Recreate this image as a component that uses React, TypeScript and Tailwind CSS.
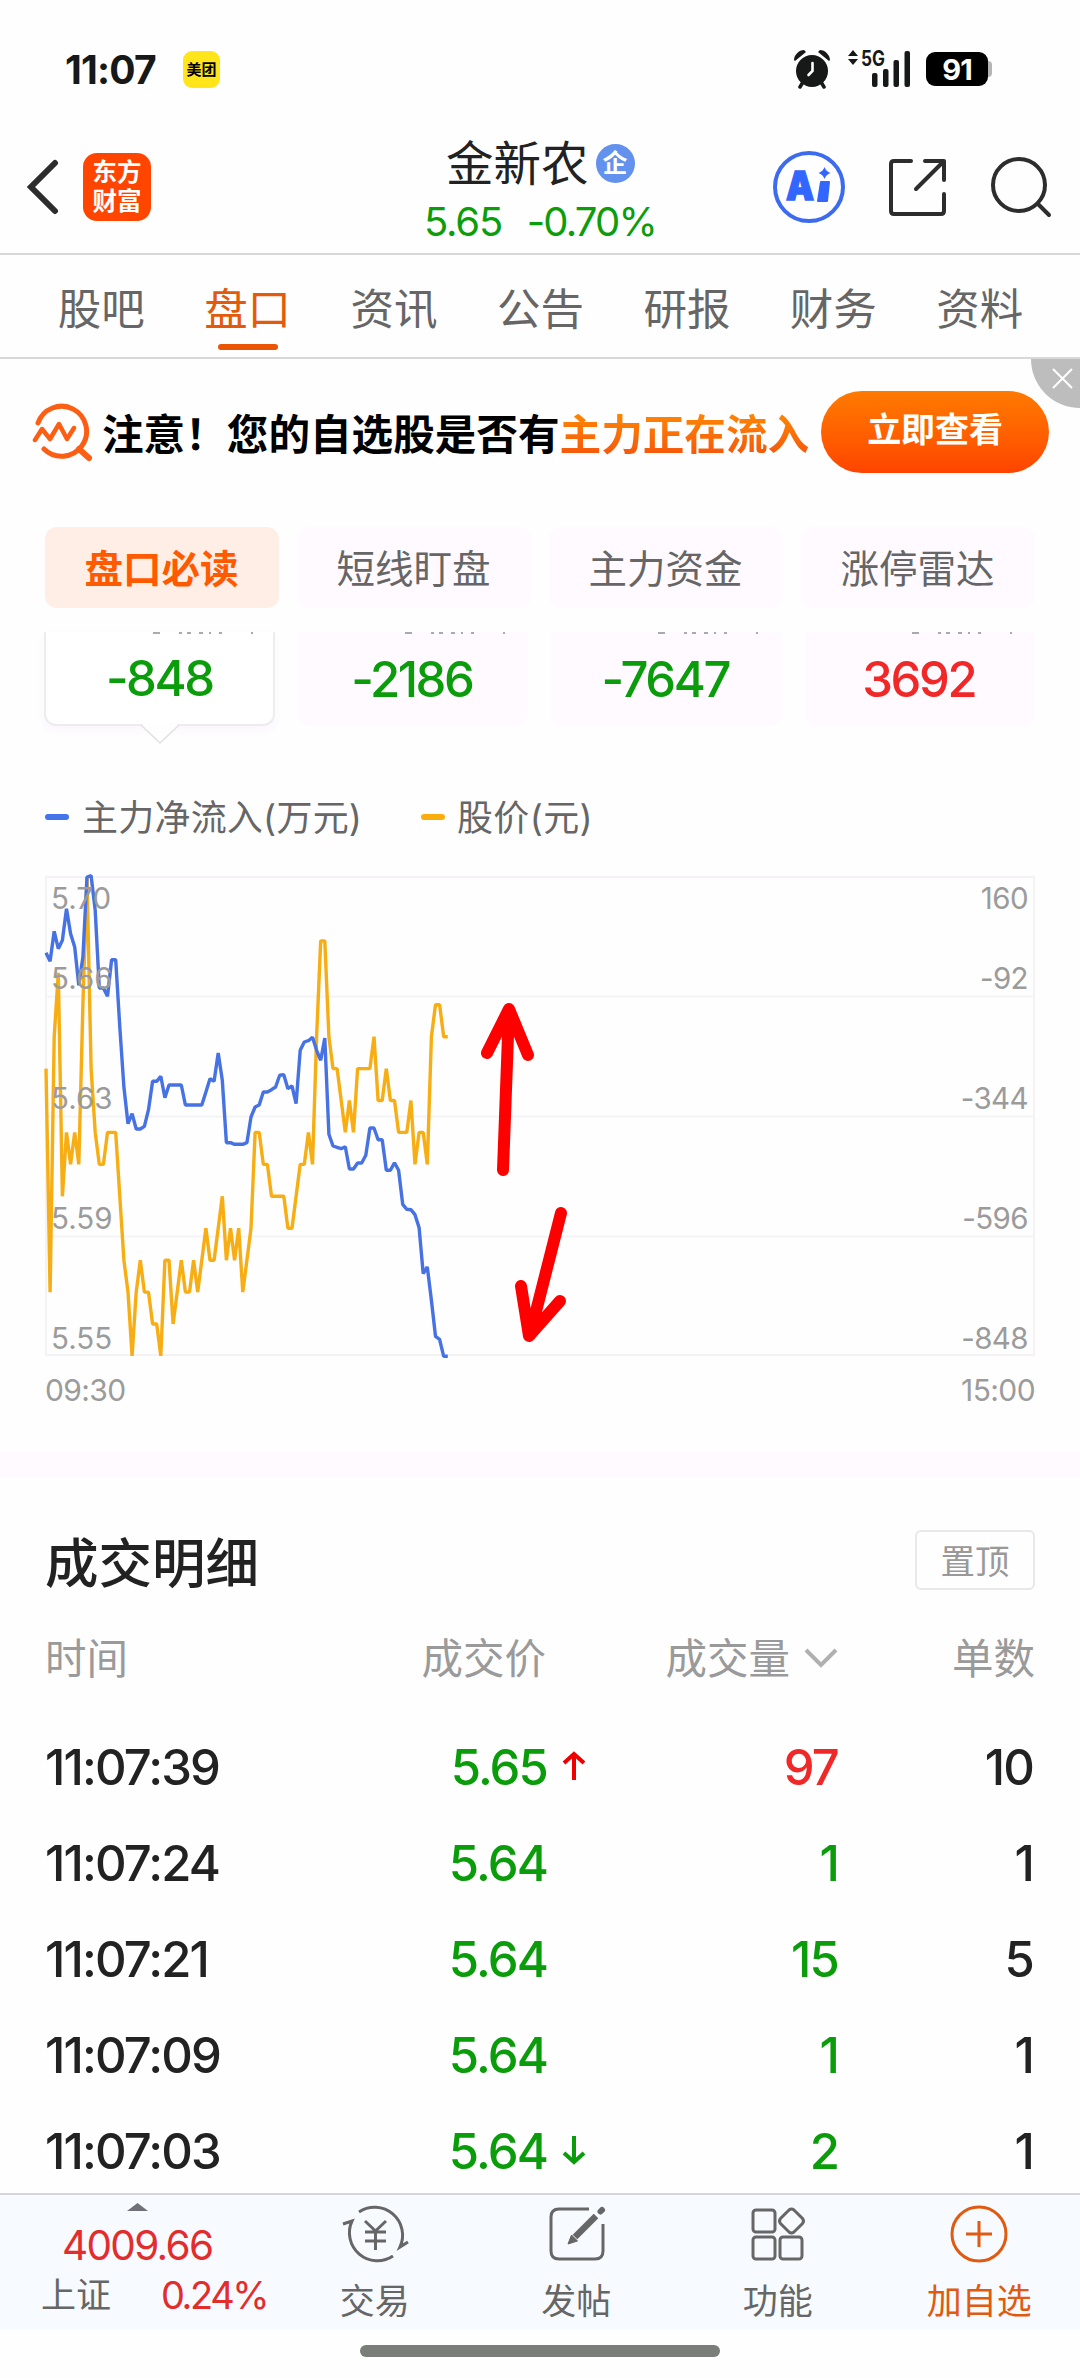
import React from 'react';
import clsx from 'clsx';

const TABS = ['股吧', '盘口', '资讯', '公告', '研报', '财务', '资料'];
const CHIPS = ['盘口必读', '短线盯盘', '主力资金', '涨停雷达'];
const FLOWS = [-848, -2186, -7647, 3692];

const TRADES = [
    { time: '11:07:39', price: '5.65', dir: 'up', volume: 97, volumeUp: true, orders: 10 },
    { time: '11:07:24', price: '5.64', dir: null, volume: 1, volumeUp: false, orders: 1 },
    { time: '11:07:21', price: '5.64', dir: null, volume: 15, volumeUp: false, orders: 5 },
    { time: '11:07:09', price: '5.64', dir: null, volume: 1, volumeUp: false, orders: 1 },
    { time: '11:07:03', price: '5.64', dir: 'down', volume: 2, volumeUp: false, orders: 1 },
];

// one point per minute, in cents above 5.50
const PRICE = [
    14, 7, 15, 17, 10, 12, 11, 12, 11, 16, 20, 14, 12, 11, 11, 12, 12, 12, 10, 8,
    7, 5, 7, 8, 7, 7, 6, 6, 5, 8, 8, 6, 7, 8, 7, 7, 8, 7, 8, 9,
    8, 8, 9, 10, 8, 9, 8, 9, 7, 8, 9, 12, 12, 11, 11, 10, 10, 10, 10, 9,
    9, 10, 11, 11, 12, 11, 15, 18, 18, 15, 14, 14, 13, 12, 13, 12, 14, 14, 14, 14,
    15, 13, 13, 14, 13, 13, 12, 12, 12, 13, 11, 12, 12, 11, 15, 16, 16, 15, 15,
];

// net inflow, distance below the top line in thirds of a pixel
const INFLOW = [
    227, 253, 163, 215, 190, 95, 170, 210, 325, 240, 0, -4, 100, 333, 333, 358, 248, 248, 450, 630,
    740, 710, 756, 756, 748, 698, 613, 613, 598, 662, 624, 624, 624, 624, 684, 684, 684, 684, 684, 645,
    605, 613, 528, 610, 797, 797, 802, 802, 802, 797, 720, 690, 684, 645, 645, 638, 630, 595, 593, 635,
    627, 680, 520, 495, 491, 481, 520, 550, 483, 772, 807, 811, 815, 809, 876, 876, 858, 858, 835, 753,
    753, 788, 788, 880, 880, 857, 880, 982, 997, 998, 1013, 1052, 1190, 1170, 1270, 1378, 1387, 1438, 1438,
];

const STEP = 4.1;
const pricePoints = PRICE.map((p, i) => `${(i * STEP).toFixed(1)},${((20 - p) * 31.93).toFixed(1)}`).join(' ');
const inflowPoints = INFLOW.map((v, i) => `${(i * STEP).toFixed(1)},${(v / 3).toFixed(1)}`).join(' ');

export default function App() {
    return (
        <div className="w-[1080px] h-[2378px] overflow-hidden bg-[#fefefe] text-[#222] font-['Inter','Noto_Sans_CJK_SC',sans-serif] leading-none whitespace-nowrap">
            <StatusBar />
            <Header />
            <nav className="h-[104px] pt-[7px] pl-[28px] pr-[27px] flex border-b-2 border-[#d8d8dc]">
                {TABS.map((tab, i) => (
                    <div
                        key={tab}
                        className={clsx(
                            'relative flex-1 flex items-center justify-center text-[43.5px]',
                            i === 1 ? 'text-[#e45a0c]' : 'text-[#666]'
                        )}
                    >
                        {tab}
                        {i === 1 && <span className="absolute bottom-[7px] w-[60px] h-[6px] rounded-full bg-[#ea5504]" />}
                    </div>
                ))}
            </nav>
            <Banner />
            <div className="mt-[17px] px-[45px] grid grid-cols-4 gap-[18px]">
                {CHIPS.map((chip, i) => (
                    <div
                        key={chip}
                        className={clsx(
                            'h-[81px] rounded-xl flex items-center justify-center pt-[4px] pr-[1px] text-[38.5px]',
                            i === 0 ? 'bg-[#ffeee6] text-[#ff5a00] font-bold' : 'bg-[#fefaff] text-[#666]'
                        )}
                    >
                        {chip}
                    </div>
                ))}
            </div>
            <FlowCards />
            <div className="mt-[64px] h-[56px] px-[45px] flex items-center text-[36px] text-[#666]">
                <span className="w-[24px] h-[6px] mb-[2px] rounded-full bg-[#4573ea]" />
                <span className="ml-[13px] w-[339px] tracking-[0.006em]">主力净流入(万元)</span>
                <span className="w-[24px] h-[6px] mb-[2px] rounded-full bg-[#faae0b]" />
                <span className="ml-[12px] tracking-[0.01em]">股价(元)</span>
            </div>
            <FlowChart />
            <div className="mt-[48px] h-[25px] bg-[#fefaff]" />
            <TradeList />
            <BottomBar />
            <div className="mx-auto mt-[15px] w-[360px] h-[12px] rounded-full bg-[#7b7d7a]" />
        </div>
    );
}

function StatusBar() {
    return (
        <div className="h-[120px] pt-[18px] flex items-center">
            <span className="ml-[65px] w-[118px] text-[39px] font-bold tracking-[-0.02em] text-[#171918]">11:07</span>
            <span className="w-[37px] h-[37px] rounded-[9px] bg-[#ffe51a] flex items-center justify-center text-[15px] font-bold text-black">美团</span>
            <svg className="ml-[573px]" width="38" height="40" viewBox="0 0 38 40" fill="#171918">
                <circle cx="19" cy="22" r="16" />
                <path d="M1 11C1 6 6 1 11 1L13 3L2 12ZM37 11C37 6 32 1 27 1L25 3L36 12Z" />
                <path d="M10 33L7 38M28 33L31 38" stroke="#171918" strokeWidth="3.5" strokeLinecap="round" />
                <path d="M19.5 14V22L15.5 26" stroke="#fff" strokeWidth="2.6" fill="none" strokeLinecap="round" />
            </svg>
            <svg className="ml-[16px] overflow-visible" width="63" height="40" viewBox="0 0 63 40" fill="#171918">
                <path d="M6 1L11 7H1ZM6 16L11 10H1Z" />
                <text x="14" y="16.500" fontSize="21" fontWeight="700" textLength="24" lengthAdjust="spacingAndGlyphs">5G</text>
                <rect x="25" y="24" width="5.5" height="14" rx="2" />
                <rect x="36" y="20" width="5.5" height="18" rx="2" />
                <rect x="46.5" y="11" width="5.5" height="27" rx="2" />
                <rect x="57.5" y="2" width="5.5" height="36" rx="2" />
            </svg>
            <span className="ml-[16px] w-[62px] h-[34px] rounded-[9px] bg-black flex items-center justify-center text-[29px] font-bold tracking-[-0.03em] text-white">91</span>
            <span className="w-[4px] h-[16px] rounded-r-[4px] bg-[#b5b5b5]" />
        </div>
    );
}

function Header() {
    return (
        <header className="h-[135px] flex items-center border-b-2 border-[#d8d8da]">
            <svg className="ml-[26px]" width="34" height="56" viewBox="0 0 34 56" fill="none" stroke="#2d2d2d" strokeWidth="6" strokeLinecap="round">
                <path d="M29 4L5 28L29 52" />
            </svg>
            <div className="ml-[23px] w-[68px] h-[68px] rounded-[14px] bg-[#ff4500] flex flex-col items-center justify-center gap-[4px] text-[24.5px] font-bold text-white">
                <span>东方</span>
                <span>财富</span>
            </div>
            <div className="ml-[273px] w-[232px] pt-[8px] flex flex-col">
                <div className="ml-[22px] h-[52px] flex items-center">
                    <span className="text-[47.5px]">金新农</span>
                    <span className="ml-[7px] w-[39px] h-[39px] rounded-full bg-[#6391ee] flex items-center justify-center text-[25px] font-bold text-white">企</span>
                </div>
                <div className="mt-[10px] h-[44px] flex items-center text-[40px] text-[#0b9d0b]">
                    <span className="w-[106px] tracking-[-0.03em]">5.65</span>
                    <span className="ml-[3px] tracking-[-0.045em]">-0.70%</span>
                </div>
            </div>
            <svg className="ml-[117px]" width="72" height="72" viewBox="0 0 72 72" fill="#3366ff">
                <circle cx="36" cy="36" r="34" fill="none" stroke="#3c6bf0" strokeWidth="4" />
                <text x="13" y="49" fontSize="40" fontWeight="900" stroke="#3366ff" strokeWidth="1.5" textLength="28" lengthAdjust="spacingAndGlyphs">A</text>
                <path d="M48 31H56L54 50H45Z" stroke="#3366ff" strokeWidth="2" strokeLinejoin="round" />
                <path d="M51.5 16Q53 20.5 57.5 22Q53 23.5 51.5 28Q50 23.5 45.5 22Q50 20.5 51.5 16Z" />
            </svg>
            <svg className="ml-[42px]" width="60" height="60" viewBox="0 0 60 60" fill="none" stroke="#2d2d2d" strokeWidth="4" strokeLinecap="round" strokeLinejoin="round">
                <path d="M24 4H7Q4 4 4 7V54Q4 57 7 57H54Q57 57 57 54V37" />
                <path d="M38 4H57V23M56 5L29 32" />
            </svg>
            <svg className="ml-[43px]" width="62" height="62" viewBox="0 0 62 62" fill="none" stroke="#2d2d2d" strokeWidth="4" strokeLinecap="round">
                <circle cx="29" cy="29" r="26" />
                <path d="M48 48L59 59" />
            </svg>
        </header>
    );
}

function Banner() {
    return (
        <div className="relative h-[151px] pl-[32px] flex items-center">
            <svg className="mb-[3px]" width="62" height="60" viewBox="0 0 62 60" fill="none" stroke="#fc5e14" strokeWidth="5" strokeLinecap="round" strokeLinejoin="round">
                <path d="M6 20A25 25 0 1 1 12 46" />
                <path d="M47 46L57 55" strokeWidth="6" />
                <path d="M3 37L10 26L18 36L27 21L35 36L42 25" strokeWidth="4.5" />
            </svg>
            <span className="ml-[8px] pt-[2px] text-[41.6px] font-bold text-black">注意！您的自选股是否有</span>
            <span className="pt-[6px] pb-1 text-[41.6px] font-bold bg-gradient-to-b from-[#ff8a00] to-[#f4500c] bg-clip-text text-transparent">主力正在流入</span>
            <button className="ml-[12px] mb-[6px] w-[228px] h-[82px] pb-[4px] rounded-full bg-gradient-to-b from-[#ff7a00] to-[#ff4300] text-[34px] font-bold text-white">立即查看</button>
            <div className="absolute right-0 top-0 w-[49px] h-[49px] pl-[21px] pt-[9px] rounded-bl-full bg-[#bdbdbd]">
                <svg width="21" height="21" viewBox="0 0 21 21" stroke="#fff" strokeWidth="2">
                    <path d="M1 1L20 20M20 1L1 20" />
                </svg>
            </div>
        </div>
    );
}

function FlowCards() {
    return (
        <div className="mt-[24px] pl-[44px] pr-[45px] grid grid-cols-4 gap-[23px]">
            {FLOWS.map((value, i) => (
                <div
                    key={value}
                    className={clsx(
                        'relative h-[94px] rounded-b-xl flex items-center justify-center text-[49px] font-medium tracking-[-0.05em]',
                        i === 0 ? 'bg-white border-2 border-t-0 border-[#efecef] shadow-[0_4px_10px_#faf6fb]' : 'pr-[2px] bg-[#fefaff]',
                        value > 0 ? 'text-[#f02828]' : 'text-[#0a9c0a]'
                    )}
                >
                    {/* feet of the title row that is scrolled under the chips */}
                    <svg className="absolute top-0 left-[107px]" width="102" height="2" stroke="#aaa" strokeWidth="2">
                        <path d="M0 1H7M26 1H29M34 1H38M46 1H50M56 1H58M66 1H69M98 1H100" />
                    </svg>
                    {value}
                    {i === 0 && (
                        <svg className="absolute left-[94px] top-[91px]" width="40" height="22" fill="#fefefe" stroke="#e3e0e3" strokeWidth="1.5">
                            <path d="M1 2L20 20L39 2" />
                            <path d="M3 0H37V2H3Z" stroke="none" />
                        </svg>
                    )}
                </div>
            ))}
        </div>
    );
}

function FlowChart() {
    return (
        <div className="mt-[30px] mx-[45px]">
            <div className="relative h-[480px] border-2 border-[#f5f2f5] flex flex-col text-[29.5px] text-[#9b9b9b]">
                <svg className="absolute -left-px -top-[1.5px] overflow-visible" width="988" height="479" fill="none">
                    <path d="M0 119.500H988M0 239.500H988M0 359.500H988" stroke="#f4f3f5" strokeWidth="2" />
                    <polyline points={pricePoints} stroke="#f7ae14" strokeWidth="3.4" strokeLinejoin="bevel" />
                    <polyline points={inflowPoints} stroke="#4672e3" strokeWidth="3.4" strokeLinejoin="bevel" />
                    <g stroke="#ff0000" strokeWidth="12" strokeLinecap="round" strokeLinejoin="round">
                        <path d="M463 132L457 293M441 176L463 132L482 178" />
                        <path d="M463 132L455 154H471Z" fill="#ff0000" strokeWidth="6" />
                        <path d="M515 336L484 458M475 409L483 459L514 424" />
                        <path d="M483 459L481 440L492 444Z" fill="#ff0000" strokeWidth="6" />
                    </g>
                </svg>
                <AxisRow left="5.70" right="160" className="h-[39px]" />
                <AxisRow left="5.66" right="-92" className="h-[80px]" />
                <AxisRow left="5.63" right="-344" className="h-[120px]" />
                <AxisRow left="5.59" right="-596" className="h-[120px]" />
                <AxisRow left="5.55" right="-848" className="h-[120px]" />
            </div>
            <div className="h-[48px] pt-[19px] flex justify-between text-[30px] tracking-[-0.02em] text-[#9b9b9b]">
                <span>09:30</span>
                <span>15:00</span>
            </div>
        </div>
    );
}

function AxisRow({ left, right, className }: { left: string; right: string; className: string }) {
    return (
        <div className={clsx('relative shrink-0 pl-[4px] pr-[5px] pb-[4px] flex items-end justify-between', className)}>
            <span>{left}</span>
            <span className="tracking-[-0.02em]">{right}</span>
        </div>
    );
}

function TradeList() {
    return (
        <section className="h-[716px] px-[45px] overflow-hidden">
            <div className="mt-[53px] h-[60px] flex items-center justify-between">
                <h2 className="pt-[8px] text-[53.5px] font-medium">成交明细</h2>
                <button className="w-[120px] h-[60px] pt-[4px] rounded-[6px] border-2 border-[#e8e8ea] text-[34.5px] text-[#999]">置顶</button>
            </div>
            <div className="mt-[40px] h-[60px] grid grid-cols-[501px_292px_1fr] items-center text-[41.5px] text-[#9a9a9a]">
                <div className="flex justify-between">
                    <span>时间</span>
                    <span>成交价</span>
                </div>
                <div className="flex justify-end items-center gap-[14px]">
                    成交量
                    <svg className="mb-[5px]" width="34" height="22" viewBox="0 0 34 22" fill="none" stroke="#b0b0b0" strokeWidth="4">
                        <path d="M2 3L17 18L32 3" />
                    </svg>
                </div>
                <span className="text-right">单数</span>
            </div>
            <div className="mt-[29px] text-[49px] font-medium tracking-[-0.038em]">
                {TRADES.map((t) => (
                    <div key={t.time} className="h-[96px] grid grid-cols-[502px_291px_1fr] items-center">
                        <div className="flex justify-between">
                            <span>{t.time}</span>
                            <span className="text-[#0a9c0a]">{t.price}</span>
                        </div>
                        <div className={clsx('pl-[15px] flex items-center', t.volumeUp ? 'text-[#f02828]' : 'text-[#0a9c0a]')}>
                            {t.dir === 'up' && <PriceArrow className="mb-[3px] text-[#ee0000]" />}
                            {t.dir === 'down' && <PriceArrow className="mb-[3px] text-[#0a9c0a] rotate-180" />}
                            <span className="ml-auto">{t.volume}</span>
                        </div>
                        <span className="pr-[2px] text-right">{t.orders}</span>
                    </div>
                ))}
            </div>
        </section>
    );
}

function PriceArrow({ className }: { className: string }) {
    return (
        <svg className={className} width="24" height="30" viewBox="0 0 24 30" fill="none" stroke="currentColor" strokeWidth="4">
            <path d="M12 29V4M2 12L12 3L22 12" />
        </svg>
    );
}

function BottomBar() {
    return (
        <footer className="h-[137px] flex border-t-2 border-[#d6d6da] bg-[#f7faff]">
            <div className="w-[274px] flex flex-col">
                <svg className="ml-[127px] mt-[8px]" width="21" height="8" fill="#707078">
                    <path d="M0 8L10.5 0L21 8Z" />
                </svg>
                <span className="ml-[62px] mt-[15px] h-[40px] text-[40.5px] leading-[40px] tracking-[-0.042em] text-[#e32c2c]">4009.66</span>
                <div className="ml-[41px] mt-[10px] flex items-center text-[35px] text-[#666]">
                    <span className="w-[120px]">上证</span>
                    <span className="text-[38px] tracking-[-0.065em] text-[#e32c2c]">0.24%</span>
                </div>
            </div>
            <NavItem label="交易">
                <path d="M19 13A28 28 0 0 1 60 48L68 43M53 57A28 28 0 0 1 12 22L3 25" />
                <path d="M25 22L35.5 32L46 22M35.5 32V51M25 33H46M25 42H46" />
            </NavItem>
            <NavItem label="发帖">
                <path d="M48 10H18Q10 10 10 18V52Q10 60 18 60H54Q62 60 62 52V25" />
                <path d="M55 17L34 38" strokeWidth="6.500" />
                <path d="M27 45L30.5 36L36.5 42Z" fill="currentColor" strokeWidth="1" />
                <path d="M59.5 12.5L61 11" strokeWidth="6" strokeLinecap="round" />
            </NavItem>
            <NavItem label="功能">
                <rect x="10" y="11" width="22" height="22" rx="3" />
                <rect x="10" y="38" width="22" height="22" rx="3" />
                <rect x="37" y="38" width="22" height="22" rx="3" />
                <path d="M46 11Q48.5 9 51 11L59.5 19.5Q61.5 22 59.5 24.5L51 33Q48.5 35 46 33L37.5 24.5Q35.5 22 37.5 19.5Z" />
            </NavItem>
            <NavItem label="加自选" active>
                <circle cx="35" cy="35" r="27" />
                <path d="M35 22V48M22 35H48" />
            </NavItem>
        </footer>
    );
}

function NavItem({ label, active, children }: { label: string; active?: boolean; children: React.ReactNode }) {
    return (
        <div className={clsx('flex-1 flex flex-col items-center', active ? 'text-[#e05a10]' : 'text-[#666]')}>
            <svg className="mt-[4px]" width="70" height="70" viewBox="0 0 70 70" fill="none" stroke="currentColor" strokeWidth="3">
                {children}
            </svg>
            <span className="mt-[15px] text-[35px]">{label}</span>
        </div>
    );
}
